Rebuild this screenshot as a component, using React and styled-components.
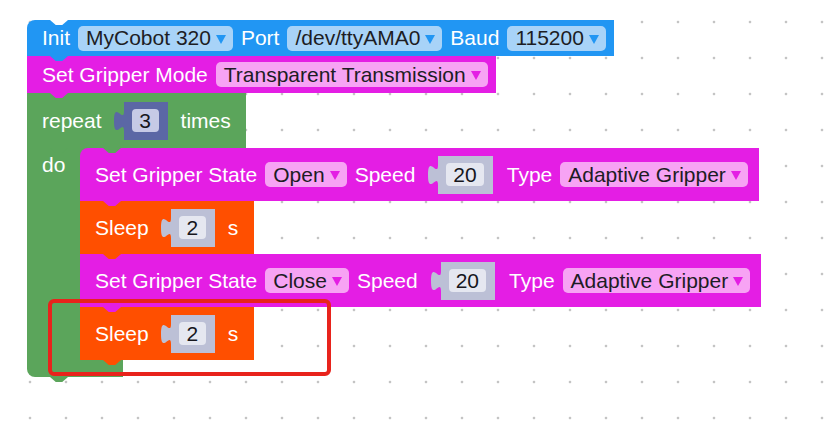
import styled, { createGlobalStyle } from 'styled-components';

const GlobalStyle = createGlobalStyle`
  html, body {
    margin: 0;
    padding: 0;
    background: #fff;
  }
  body {
    font-family: 'Liberation Sans', Arial, sans-serif;
  }
`;

const BLUE = '#2196f3';
const MAGENTA = '#e41ee4';
const GREEN = '#5ba55b';
const ORANGE = '#ff4f00';
const SLATE = '#5b67a5';
const GREY = '#bcc0d6';

const Workspace = styled.div`
  width: 825px;
  height: 421px;
  box-sizing: border-box;
  padding: 20px 0 0 27px;
  overflow: hidden;
  background-color: #fff;
  background-image: radial-gradient(circle, #c4c4c4 1px, transparent 1.7px);
  background-size: 36px 36px;
  background-position: 12px 4px;
  font-family: 'Liberation Sans', Arial, sans-serif;
  font-size: 21px;
  line-height: 24px;
`;

const Stack = styled.div`
  display: flex;
  flex-direction: column;
  align-items: flex-start;
`;

const Block = styled.div`
  position: relative;
  display: flex;
  align-items: center;
  gap: ${p => p.$gap ?? 7}px;
  box-sizing: border-box;
  height: ${p => p.$h}px;
  padding: 0 ${p => p.$pr ?? 8}px 0 15px;
  background: ${p => p.$color};
  border-radius: ${p => (p.$round ? '8px 0 0 0' : '0')};
  color: #fff;
  white-space: nowrap;

  &::before {
    content: '';
    display: ${p => (p.$notch ? 'block' : 'none')};
    position: absolute;
    left: 23px;
    top: 0;
    width: 18px;
    height: 5px;
    background: ${p => p.$notch};
    clip-path: polygon(0 0, 100% 0, 68% 100%, 32% 100%);
    z-index: 1;
  }

  &::after {
    content: '';
    position: absolute;
    left: 23px;
    bottom: -5px;
    width: 18px;
    height: 5px;
    background: ${p => p.$color};
    clip-path: polygon(0 0, 100% 0, 68% 100%, 32% 100%);
    z-index: 2;
  }
`;

const Label = styled.span`
  color: #fff;
`;

const Dropdown = styled.span`
  display: flex;
  align-items: center;
  gap: 5px;
  height: 25px;
  padding: 0 7px 0 8px;
  border-radius: 5px;
  background: ${p => p.$bg};
  color: #1d1d24;
`;

const Arrow = styled.span`
  width: 0;
  height: 0;
  margin-top: 2px;
  border-left: 5px solid transparent;
  border-right: 5px solid transparent;
  border-top: 9px solid ${p => p.$color};
`;

const Socket = styled.span`
  display: flex;
  align-items: stretch;
  height: 38px;
  margin: 0 6px 0 5px;
`;

const SocketTab = styled.svg`
  display: block;
  width: 10px;
  height: 38px;
`;

const SocketBody = styled.span`
  display: flex;
  align-items: center;
  padding: 0 9px 0 8px;
  background: ${p => p.$color};
`;

const NumberField = styled.span`
  display: flex;
  align-items: center;
  justify-content: center;
  box-sizing: border-box;
  min-width: 27px;
  height: 23px;
  padding: 0 7px;
  border-radius: 4px;
  background: ${p => p.$bg};
  color: #16161c;
`;

const Loop = styled.div`
  display: flex;
  flex-direction: column;
  align-items: flex-start;
`;

const LoopBody = styled.div`
  display: flex;
  align-items: stretch;
`;

const LoopArm = styled.div`
  position: relative;
  width: 53px;
  box-sizing: border-box;
  padding: 5px 0 0 15px;
  background: ${GREEN};
  color: #fff;

  /* fills the rounded corner behind the first inner block */
  &::after {
    content: '';
    position: absolute;
    left: 100%;
    top: 0;
    width: 10px;
    height: 10px;
    background: ${GREEN};
  }
`;

const LoopFoot = styled.div`
  position: relative;
  width: 96px;
  height: 17px;
  background: ${GREEN};
  border-radius: 0 0 0 8px;

  &::after {
    content: '';
    position: absolute;
    left: 23px;
    bottom: -5px;
    width: 18px;
    height: 5px;
    background: ${GREEN};
    clip-path: polygon(0 0, 100% 0, 68% 100%, 32% 100%);
  }
`;

const Marked = styled.div`
  position: relative;
  display: flex;
`;

const Highlight = styled.div`
  position: absolute;
  left: -32px;
  top: -8px;
  width: 283px;
  height: 77px;
  box-sizing: border-box;
  border: 4px solid #e8231c;
  border-radius: 6px;
  pointer-events: none;
  z-index: 3;
`;

const Value = ({ color, field, children }) => (
  <Socket>
    <SocketTab viewBox='0 0 10 38'>
      <path d='M10,9 C10,22 0,-2 0,19 S10,16 10,29 Z' fill={color} />
    </SocketTab>
    <SocketBody $color={color}>
      <NumberField $bg={field}>{children}</NumberField>
    </SocketBody>
  </Socket>
);

const Select = ({ bg, color, children }) => (
  <Dropdown $bg={bg}>
    {children}
    <Arrow $color={color} />
  </Dropdown>
);

const GripperState = ({ state, first }) => (
  <Block
    $color={MAGENTA}
    $h={53}
    $gap={8}
    $pr={11}
    $round={first}
    $notch={first ? GREEN : null}
  >
    <Label>Set Gripper State</Label>
    <Select bg='#f7a3f4' color={MAGENTA}>{state}</Select>
    <Label>Speed</Label>
    <Value color={GREY} field='#e5e7f0'>20</Value>
    <Label>Type</Label>
    <Select bg='#f7a3f4' color={MAGENTA}>Adaptive Gripper</Select>
  </Block>
);

const Sleep = () => (
  <Block $color={ORANGE} $h={53} $pr={16}>
    <Label>Sleep</Label>
    <Value color={GREY} field='#e5e7f0'>2</Value>
    <Label>s</Label>
  </Block>
);

const App = () => {
  return (
    <>
      <GlobalStyle />
      <Workspace>
        <Stack>
          <Block $color={BLUE} $h={36} $gap={8} $round $notch='#fff'>
            <Label>Init</Label>
            <Select bg='#a8d3f8' color={BLUE}>MyCobot 320</Select>
            <Label>Port</Label>
            <Select bg='#a8d3f8' color={BLUE}>/dev/ttyAMA0</Select>
            <Label>Baud</Label>
            <Select bg='#a8d3f8' color={BLUE}>115200</Select>
          </Block>
          <Block $color={MAGENTA} $h={37} $gap={8}>
            <Label>Set Gripper Mode</Label>
            <Select bg='#f7a3f4' color={MAGENTA}>Transparent Transmission</Select>
          </Block>
          <Loop>
            <Block $color={GREEN} $h={55} $pr={15}>
              <Label>repeat</Label>
              <Value color={SLATE} field='#c6cae6'>3</Value>
              <Label>times</Label>
            </Block>
            <LoopBody>
              <LoopArm>do</LoopArm>
              <Stack>
                <GripperState state='Open' first />
                <Sleep />
                <GripperState state='Close' />
                <Marked>
                  <Sleep />
                  <Highlight />
                </Marked>
              </Stack>
            </LoopBody>
            <LoopFoot />
          </Loop>
        </Stack>
      </Workspace>
    </>
  );
};

export default App;
